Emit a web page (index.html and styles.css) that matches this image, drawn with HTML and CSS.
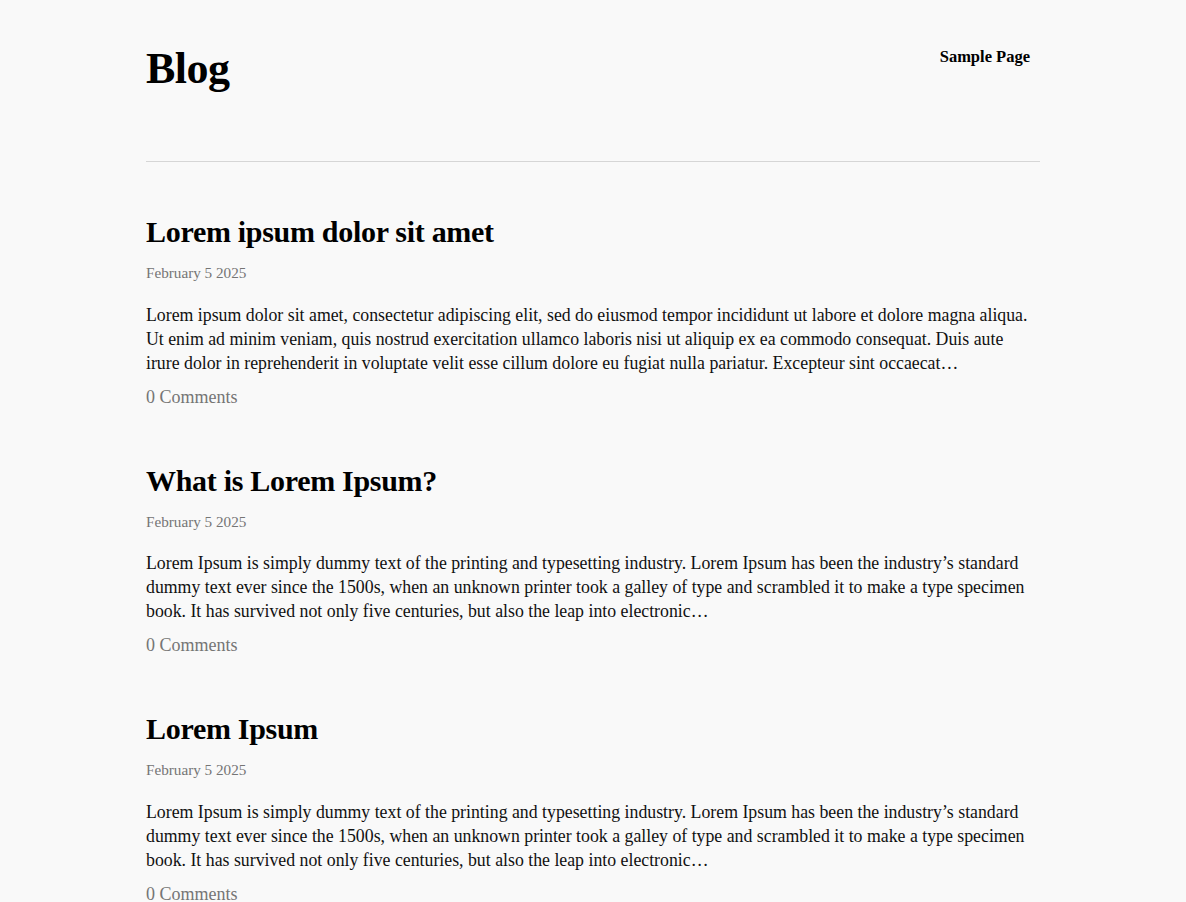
FILE: index.html
```html
<!DOCTYPE html>
<html lang="en">
<head>
<meta charset="utf-8">
<title>Blog</title>
<link rel="stylesheet" href="styles.css">
</head>
<body>
<div class="page">
  <header class="site-header">
    <h1 class="site-title">Blog</h1>
    <nav class="site-nav"><a href="#">Sample Page</a></nav>
  </header>
  <hr class="divider">
  <main class="posts">
    <article class="post">
      <h2 class="post-title">Lorem ipsum dolor sit amet</h2>
      <div class="post-date">February 5 2025</div>
      <p class="post-excerpt">Lorem ipsum dolor sit amet, consectetur adipiscing elit, sed do eiusmod tempor incididunt ut labore et dolore magna aliqua. Ut enim ad minim veniam, quis nostrud exercitation ullamco laboris nisi ut aliquip ex ea commodo consequat. Duis aute irure dolor in reprehenderit in voluptate velit esse cillum dolore eu fugiat nulla pariatur. Excepteur sint occaecat…</p>
      <div class="post-comments">0 Comments</div>
    </article>
    <article class="post">
      <h2 class="post-title">What is Lorem Ipsum?</h2>
      <div class="post-date">February 5 2025</div>
      <p class="post-excerpt">Lorem Ipsum is simply dummy text of the printing and typesetting industry. Lorem Ipsum has been the industry’s standard dummy text ever since the 1500s, when an unknown printer took a galley of type and scrambled it to make a type specimen book. It has survived not only five centuries, but also the leap into electronic…</p>
      <div class="post-comments">0 Comments</div>
    </article>
    <article class="post">
      <h2 class="post-title">Lorem Ipsum</h2>
      <div class="post-date">February 5 2025</div>
      <p class="post-excerpt">Lorem Ipsum is simply dummy text of the printing and typesetting industry. Lorem Ipsum has been the industry’s standard dummy text ever since the 1500s, when an unknown printer took a galley of type and scrambled it to make a type specimen book. It has survived not only five centuries, but also the leap into electronic…</p>
      <div class="post-comments">0 Comments</div>
    </article>
  </main>
</div>
</body>
</html>
```
FILE: styles.css
```css
html, body {
  margin: 0;
  padding: 0;
  background: #f9f9f9;
}
body {
  font-family: "Liberation Serif", "Times New Roman", serif;
  color: #111;
}
.page {
  width: 894px;
  margin: 0 auto;
}
.site-header {
  display: flex;
  justify-content: space-between;
  align-items: flex-start;
  padding: 43px 10px 65px 0;
}
.site-title {
  margin: 0;
  font-size: 44px;
  line-height: 1.2;
  font-weight: 700;
  letter-spacing: -0.5px;
  color: #000;
}
.site-nav {
  padding-top: 2px;
}
.site-nav a {
  display: block;
  font-size: 16.5px;
  line-height: 1.5;
  font-weight: 700;
  color: #000;
  text-decoration: none;
}
.divider {
  margin: 0;
  border: 0;
  border-top: 1px solid #d6d6d6;
}
.posts {
  padding-top: 52px;
  display: flex;
  flex-direction: column;
  gap: 52px;
}
.post-title {
  margin: 0;
  font-size: 30px;
  line-height: 1.2;
  font-weight: 700;
  letter-spacing: -0.3px;
  color: #000;
}
.post-date {
  margin-top: 12px;
  font-size: 15.2px;
  line-height: 1.5;
  color: #757575;
}
.post-excerpt {
  margin: 18px 0 0;
  font-size: 17.8px;
  line-height: 24px;
}
.post-comments {
  margin-top: 9px;
  font-size: 18px;
  line-height: 1.5;
  color: #757575;
}
```
